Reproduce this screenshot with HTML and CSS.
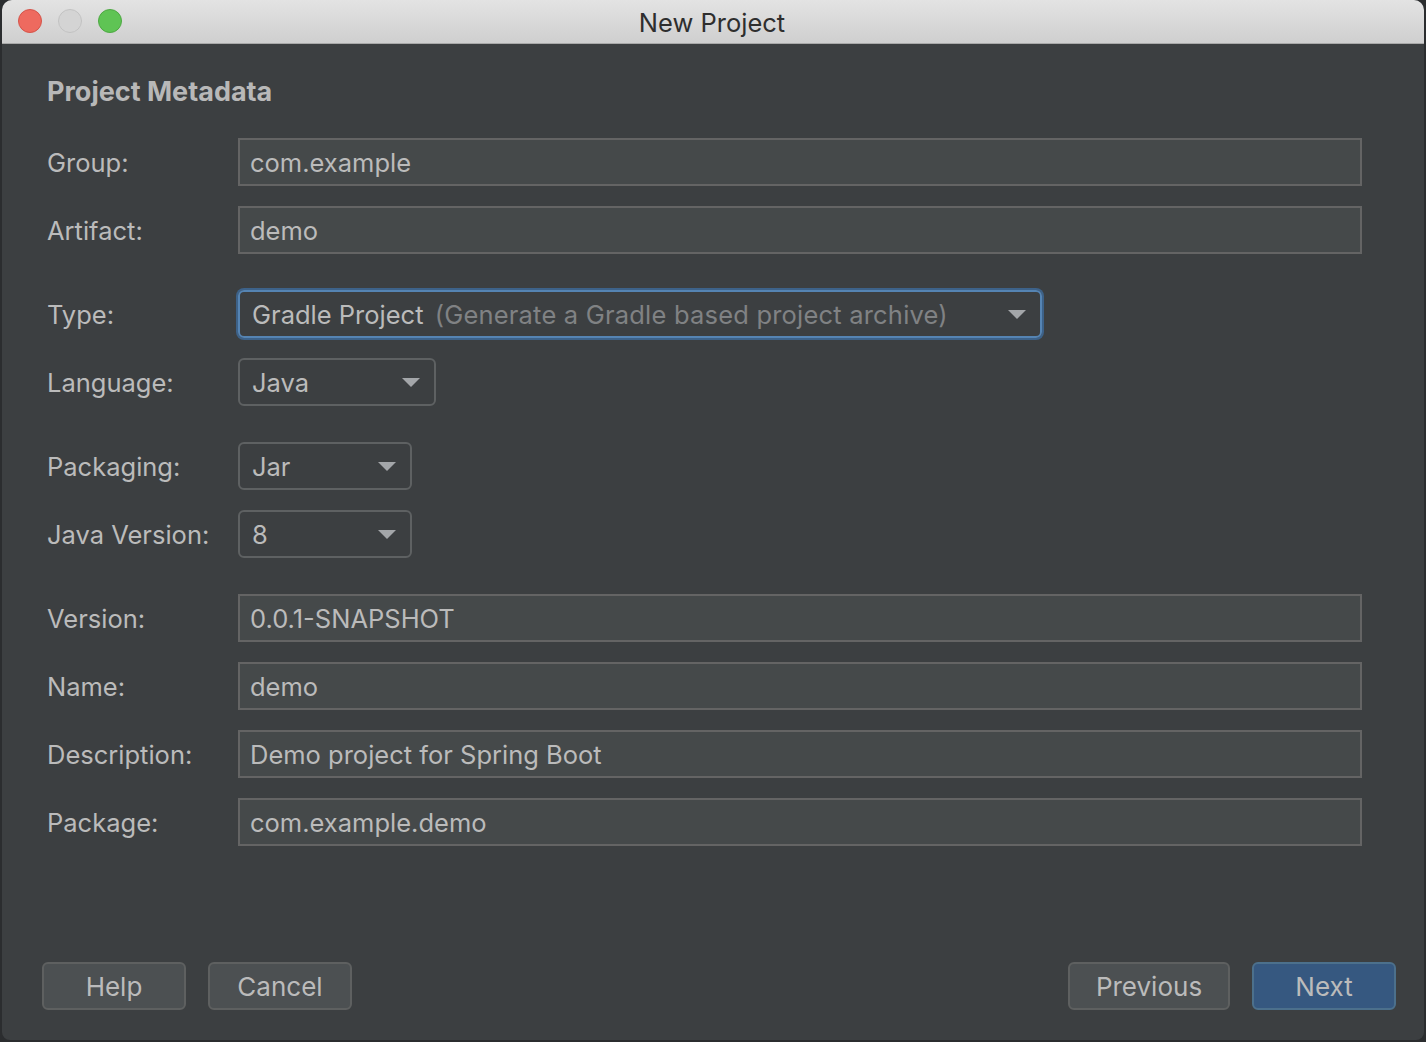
FILE: index.html
```html
<!DOCTYPE html>
<html lang="en">
<head>
    <meta charset="UTF-8">
    <title>New Project</title>
    <link rel="stylesheet" href="styles.css">
</head>
<body>
    <div class="window">
        <div class="titlebar">
            <div class="lights">
                <span class="light light-close"></span>
                <span class="light light-min"></span>
                <span class="light light-max"></span>
            </div>
            <div class="title">New Project</div>
        </div>

        <div class="content">
            <h1 class="heading">Project Metadata</h1>

            <div class="form">
                <!-- coordenadas -->
                <label>Group:</label>
                <div class="field">com.example</div>
                <label>Artifact:</label>
                <div class="field">demo</div>

                <label class="gap">Type:</label>
                <div class="combo combo-type gap focused">
                    <span>Gradle Project <span class="hint">(Generate a Gradle based project archive)</span></span>
                    <span class="arrow"></span>
                </div>
                <label>Language:</label>
                <div class="combo combo-lang"><span>Java</span><span class="arrow"></span></div>

                <label class="gap">Packaging:</label>
                <div class="combo combo-small gap"><span>Jar</span><span class="arrow"></span></div>
                <label>Java Version:</label>
                <div class="combo combo-small"><span>8</span><span class="arrow"></span></div>

                <label class="gap">Version:</label>
                <div class="field gap">0.0.1-SNAPSHOT</div>
                <label>Name:</label>
                <div class="field">demo</div>
                <label>Description:</label>
                <div class="field">Demo project for Spring Boot</div>
                <label>Package:</label>
                <div class="field">com.example.demo</div>
            </div>

            <div class="buttons">
                <button class="btn btn-help">Help</button>
                <button class="btn btn-cancel">Cancel</button>
                <div class="spacer"></div>
                <button class="btn btn-prev">Previous</button>
                <button class="btn btn-next">Next</button>
            </div>
        </div>
    </div>
</body>
</html>
```

FILE: styles.css
```css
:root {
    --panel: #3c3f41;
    --field: #45494a;
    --border: #646464;
    --text: #bbbbbb;
    --hint: #808284;
    --blue: #365880;
}

* {
    box-sizing: border-box;
}

body {
    margin: 0;
    background: #2b2d2f;
    font-family: Inter, "Open Sans", sans-serif;
    color: var(--text);
    overflow: hidden;
}

.window {
    margin-left: 2px;
    width: 1422px;
    height: 1040px;
    background: var(--panel);
    border-radius: 10px 10px 8px 8px;
    overflow: hidden;
    display: flex;
    flex-direction: column;
}

.titlebar {
    height: 44px;
    flex: none;
    background: linear-gradient(#e3e3e3, #cfcfcf);
    border-bottom: 1px solid #a9a9a9;
    position: relative;
    display: flex;
    align-items: center;
    justify-content: center;
}

.lights {
    position: absolute;
    left: 16px;
    top: 9px;
    display: flex;
    gap: 16px;
}

.light {
    width: 24px;
    height: 24px;
    border-radius: 50%;
    display: block;
}

.light-close { background: #ee6a5f; border: 1px solid #d4544a; }
.light-min { background: #d4d4d4; border: 1px solid #c2c2c2; }
.light-max { background: #5fc454; border: 1px solid #4ea843; }

.title {
    font-size: 25.5px;
    color: #2e2e2e;
    margin-left: -2px;
    padding-top: 2px;
}

.content {
    flex: 1;
    display: flex;
    flex-direction: column;
    padding: 28px 62px 30px 45px;
}

.heading {
    margin: 0 0 26px;
    font-size: 27px;
    font-weight: 700;
    color: #b8b8b8;
    line-height: 40px;
}

.form {
    display: grid;
    grid-template-columns: 191px 1fr;
    row-gap: 20px;
    align-items: center;
}

.form label {
    font-size: 25.5px;
    color: var(--text);
}

.gap {
    margin-top: 16px;
}

.field {
    height: 48px;
    background: var(--field);
    border: 2px solid var(--border);
    padding: 0 10px;
    font-size: 25.5px;
    display: flex;
    align-items: center;
}

.combo {
    height: 48px;
    border: 2px solid #5e6162;
    border-radius: 6px;
    padding: 0 14px 0 12px;
    font-size: 25.5px;
    display: flex;
    align-items: center;
    justify-content: space-between;
    justify-self: start;
}

.combo-type { width: 804px; }
.combo-lang { width: 198px; }
.combo-small { width: 174px; }

.focused {
    border: 2px solid #5584b3;
    box-shadow: 0 0 0 2px #3d6289;
}

.hint {
    color: var(--hint);
    margin-left: 4px;
    letter-spacing: 0.2px;
}

.arrow {
    width: 0;
    height: 0;
    border-left: 9px solid transparent;
    border-right: 9px solid transparent;
    border-top: 9px solid #a3a6a9;
}

.buttons {
    margin-top: auto;
    display: flex;
    gap: 22px;
    margin-left: -5px;
    margin-right: -34px;
}

.spacer {
    flex: 1;
}

.btn {
    height: 48px;
    width: 144px;
    background: #4c5052;
    border: 2px solid #5e6060;
    border-radius: 6px;
    color: var(--text);
    font-family: inherit;
    font-size: 26px;
}

.btn-prev { width: 162px; }

.btn-next {
    background: var(--blue);
    border-color: #4c708c;
}
```
